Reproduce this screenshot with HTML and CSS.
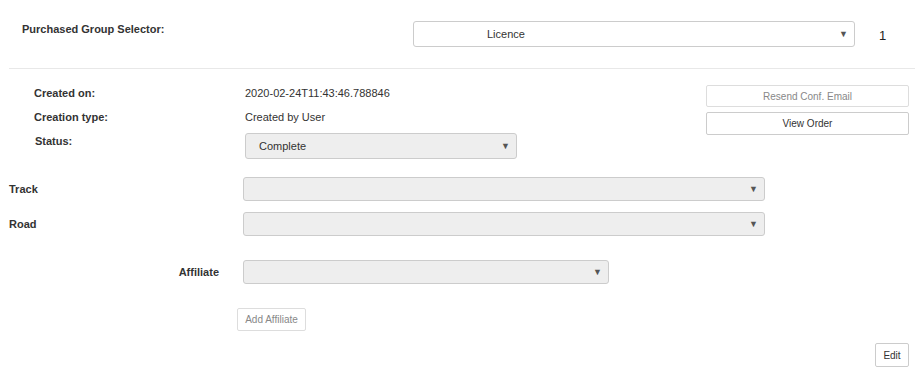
FILE: index.html
```html
<!DOCTYPE html>
<html>
<head>
<meta charset="utf-8">
<link rel="stylesheet" href="styles.css">
</head>
<body>
<div class="page">
  <div class="top">
    <div class="top-label">Purchased Group Selector:</div>
    <div class="sel sel-white sel-licence"><span class="sel-text">Licence</span><span class="arrow">▼</span></div>
    <div class="count">1</div>
  </div>

  <div class="details">
    <div class="info">
      <div class="info-label">Created on:</div>
      <div class="info-value">2020-02-24T11:43:46.788846</div>
      <div class="info-label">Creation type:</div>
      <div class="info-value">Created by User</div>
      <div class="info-label status-label">Status:</div>
      <div class="info-value status-value"><div class="sel sel-status"><span class="sel-text">Complete</span><span class="arrow">▼</span></div></div>
    </div>
    <div class="actions">
      <button class="btn btn-wide btn-disabled">Resend Conf. Email</button>
      <button class="btn btn-wide">View Order</button>
    </div>
  </div>

  <div class="field-row row-track">
    <div class="field-label">Track</div>
    <div class="sel sel-long"><span class="sel-text"></span><span class="arrow">▼</span></div>
  </div>
  <div class="field-row row-road">
    <div class="field-label">Road</div>
    <div class="sel sel-long"><span class="sel-text"></span><span class="arrow">▼</span></div>
  </div>
  <div class="field-row row-affiliate">
    <div class="field-label aff-label">Affiliate</div>
    <div class="sel sel-aff"><span class="sel-text"></span><span class="arrow">▼</span></div>
  </div>
  <div class="add-row">
    <button class="btn btn-disabled btn-add">Add Affiliate</button>
  </div>
  <div class="edit-row">
    <button class="btn btn-edit">Edit</button>
  </div>
</div>
</body>
</html>
```

FILE: styles.css
```css
* { box-sizing: border-box; }
html, body { margin: 0; padding: 0; background: #fff; }
body {
  font-family: "Liberation Sans", Arial, sans-serif;
  font-size: 11px;
  color: #333;
}
.page { padding-left: 9px; width: 915px; }

.top {
  display: flex;
  align-items: flex-start;
  height: 69px;
  padding: 21px 0 0 13px;
  border-bottom: 1px solid #e8e8e8;
}
.top-label {
  width: 391px;
  font-weight: bold;
  margin-top: 2px;
}
.count {
  margin-left: 24px;
  margin-top: 7px;
  font-size: 13px;
  color: #222;
}

.sel {
  display: flex;
  align-items: center;
  border: 1px solid #ccc;
  border-radius: 3px;
  background: #eee;
  color: #333;
  font-size: 11px;
}
.sel-text { flex: 1; }
.arrow {
  font-size: 9px;
  color: #555;
  padding-right: 6px;
}
.sel-white { background: #fff; }
.sel-licence { width: 442px; height: 26px; padding-left: 73px; }
.sel-status { width: 272px; height: 26px; padding-left: 13px; }
.sel-long { width: 522px; height: 24px; }
.sel-aff { width: 366px; height: 24px; }

.details {
  display: flex;
  justify-content: space-between;
  padding: 16px 6px 0 25px;
  height: 108px;
}
.info {
  display: grid;
  grid-template-columns: 211px auto;
  align-content: start;
}
.info-label { font-weight: bold; height: 24px; padding-top: 2px; }
.info-value { height: 24px; padding-top: 2px; }
.status-label { padding-left: 1px; }
.info .status-value { padding-top: 0; }

.actions {
  display: flex;
  flex-direction: column;
  gap: 5px;
}
.btn {
  font-family: "Liberation Sans", Arial, sans-serif;
  font-size: 10px;
  color: #333;
  background: #fff;
  border: 1px solid #ccc;
  border-radius: 2px;
  padding: 0;
}
.btn-wide { width: 203px; height: 22px; }
.btn-wide + .btn-wide { height: 23px; }
.btn-disabled { color: #888; border-color: #ddd; }

.field-row {
  display: flex;
  align-items: center;
}
.field-label { width: 234px; font-weight: bold; }
.row-track { height: 24px; }
.row-road { margin-top: 11px; height: 24px; }
.row-affiliate { margin-top: 24px; height: 24px; }
.aff-label { text-align: right; width: 210px; margin-right: 24px; }

.add-row { padding: 24px 0 0 228px; }
.btn-add { width: 69px; height: 23px; }
.edit-row {
  display: flex;
  justify-content: flex-end;
  padding: 12px 6px 0 0;
}
.btn-edit { width: 34px; height: 24px; }
```
